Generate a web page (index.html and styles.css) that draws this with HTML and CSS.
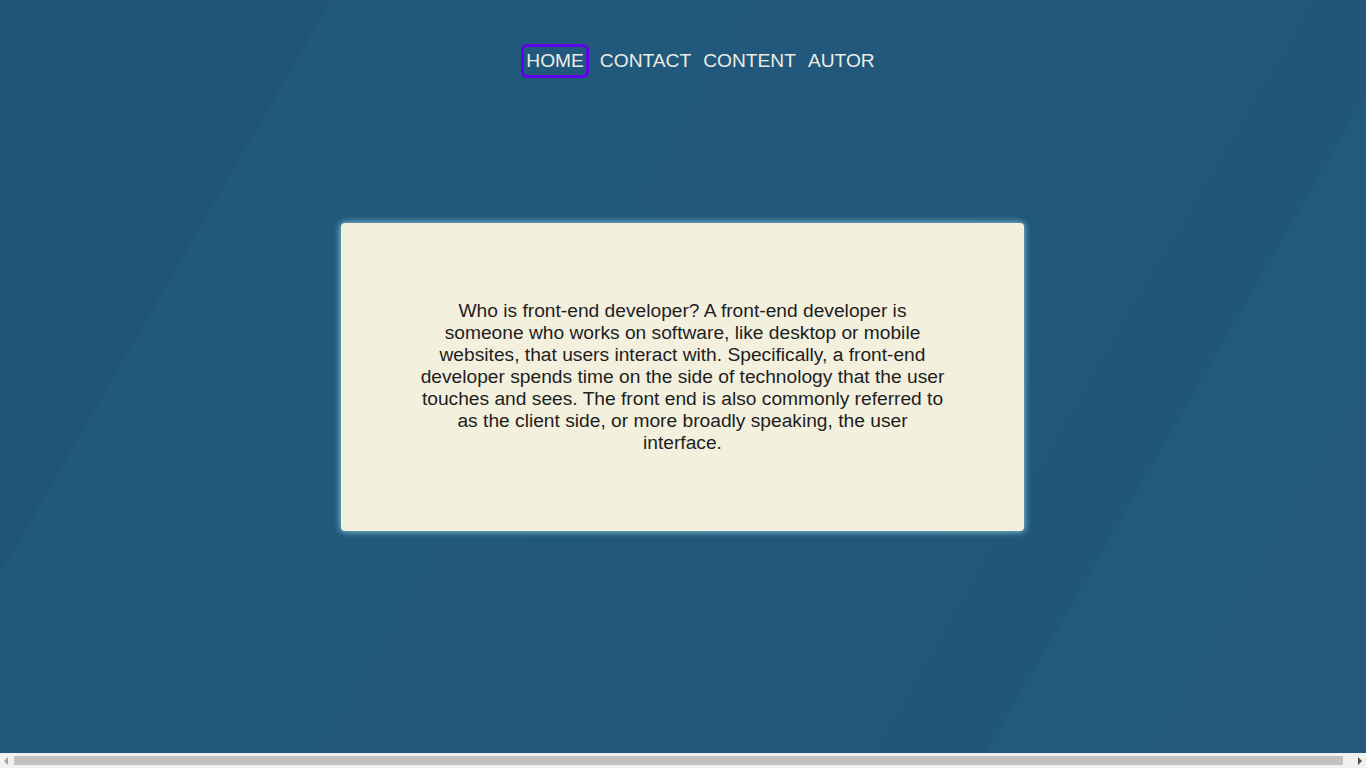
FILE: index.html
```html
<!DOCTYPE html>
<html lang="en">
<head>
<meta charset="utf-8">
<title>Front-end developer</title>
<link rel="stylesheet" href="styles.css">
</head>
<body>
<div class="page">
  <nav class="nav">
    <ul class="nav-list">
      <li><a class="nav-link is-focused" href="#">HOME</a></li>
      <li><a class="nav-link" href="#">CONTACT</a></li>
      <li><a class="nav-link" href="#">CONTENT</a></li>
      <li><a class="nav-link" href="#">AUTOR</a></li>
    </ul>
  </nav>
  <main class="card">
    <p class="card-text">Who is front-end developer? A front-end developer is someone who works on software, like desktop or mobile websites, that users interact with. Specifically, a front-end developer spends time on the side of technology that the user touches and sees. The front end is also commonly referred to as the client side, or more broadly speaking, the user interface.</p>
  </main>
</div>
<div class="hscroll" aria-hidden="true">
  <span class="hscroll-arrow hscroll-left"></span>
  <span class="hscroll-thumb"></span>
  <span class="hscroll-arrow hscroll-right"></span>
</div>
</body>
</html>
```
FILE: styles.css
```css
html {
  height: 100%;
}

body {
  margin: 0;
  min-height: 100%;
  font-family: "Liberation Sans", Arial, sans-serif;
  background-color: #215a7c;
  background-image: linear-gradient(120deg,
    #1f5477 0, #1f5477 18.4%,
    #21597c 18.4%, #20567a 78.9%,
    #215a7d 78.9%, #215a7d 87.8%,
    #22597c 87.8%, #22597c 100%);
  background-size: 1366px 753px;
  background-repeat: no-repeat;
  background-attachment: fixed;
  overflow: hidden;
}

.page {
  width: 1366px;
  min-height: 753px;
}

.nav {
  padding-top: 49px;
}

.nav-list {
  list-style: none;
  margin: 0;
  padding: 0 0 0 35px;
  width: 1331px;
  display: flex;
  justify-content: center;
  gap: 12px;
}

.nav-link {
  display: block;
  font-size: 19.2px;
  line-height: 24px;
  color: #ecece4;
  text-decoration: none;
}

.is-focused {
  margin-right: 4px;
  outline: 3px solid #6200ee;
  outline-offset: 2px;
  border-radius: 1px;
}

.card {
  box-sizing: border-box;
  width: 683px;
  height: 308px;
  margin: 150px 0 0 341px;
  padding: 0 78px;
  display: flex;
  align-items: center;
  justify-content: center;
  background: #f3f0de;
  border-radius: 4px;
  box-shadow: 0 0 6px 1px rgba(160, 225, 240, 0.75);
}

.card-text {
  margin: 0;
  text-align: center;
  font-size: 19.2px;
  line-height: 22px;
  color: #1e1e1e;
}

.hscroll {
  position: fixed;
  left: 0;
  right: 0;
  bottom: 0;
  height: 15px;
  background: #f1f1f1;
  display: flex;
  align-items: center;
}

.hscroll-thumb {
  flex: 1;
  height: 9px;
  margin: 0 11px 0 2px;
  background: #c1c1c1;
}

.hscroll-arrow {
  width: 12px;
  height: 15px;
  display: flex;
  align-items: center;
  justify-content: center;
}

.hscroll-arrow::before {
  content: "";
  width: 0;
  height: 0;
  border-top: 4px solid transparent;
  border-bottom: 4px solid transparent;
}

.hscroll-left::before {
  border-right: 4px solid #a3a3a3;
}

.hscroll-right::before {
  border-left: 4px solid #505050;
}
```
